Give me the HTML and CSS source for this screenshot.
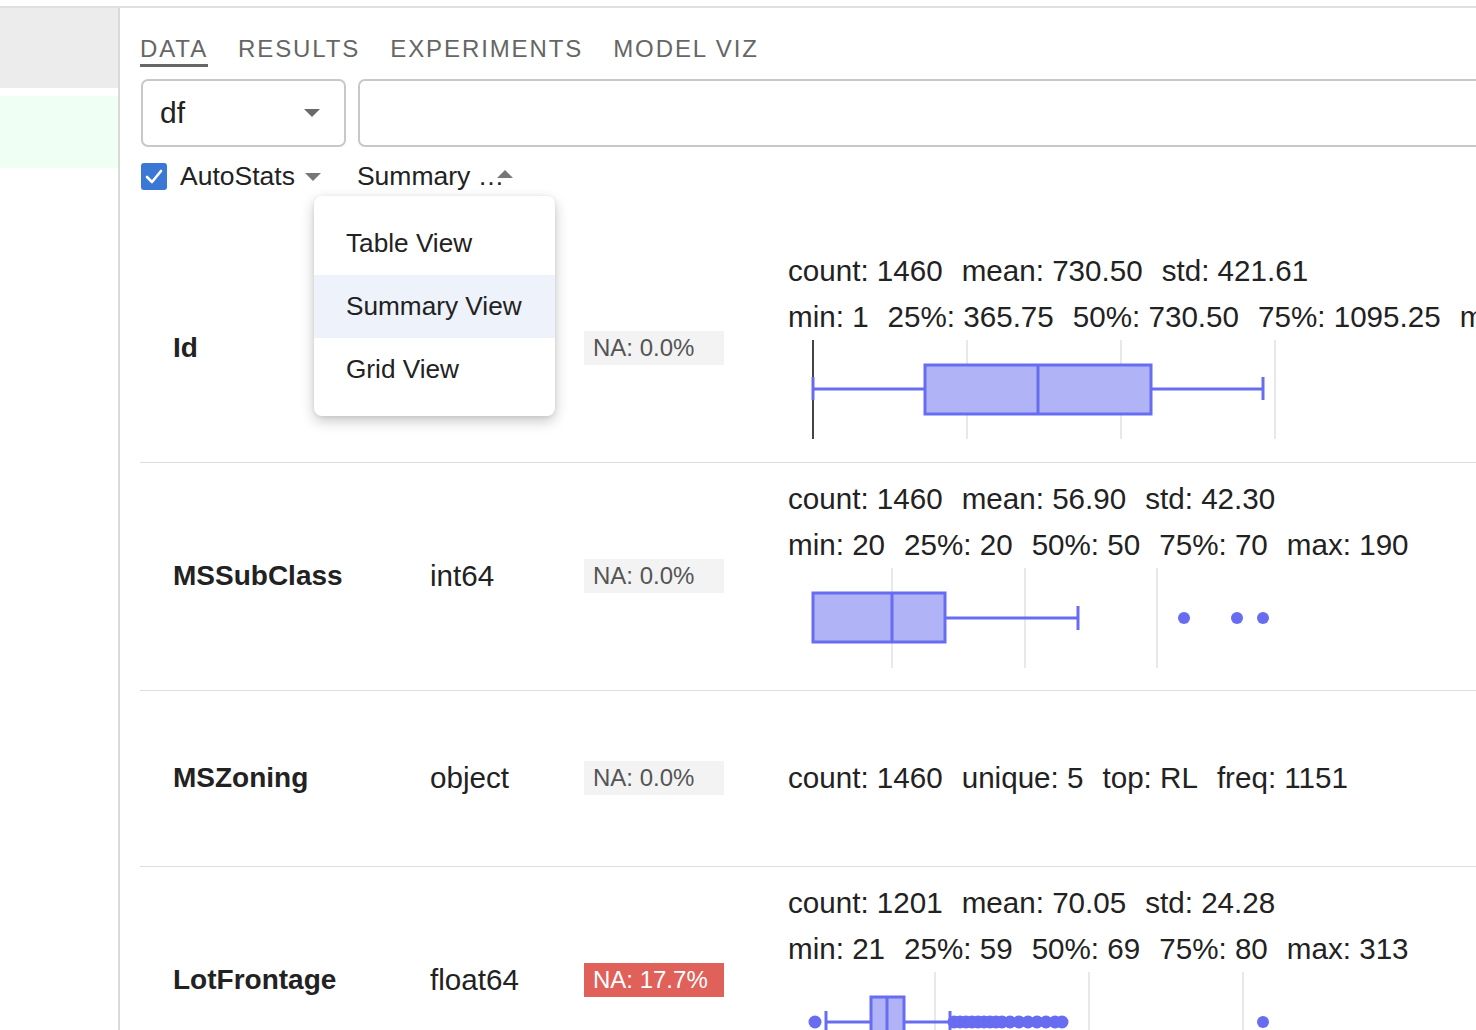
FILE: index.html
```html
<!DOCTYPE html>
<html>
<head>
<meta charset="utf-8">
<link rel="stylesheet" href="styles.css">
</head>
<body>
<div class="topline"></div>
<div class="app">
  <aside class="sidebar">
    <div class="side-gray"></div>
    <div class="side-green"></div>
  </aside>
  <main class="main">
    <nav class="tabs">
      <div class="tab active">DATA</div>
      <div class="tab">RESULTS</div>
      <div class="tab">EXPERIMENTS</div>
      <div class="tab">MODEL VIZ</div>
    </nav>
    <div class="pickers">
      <div class="select"><span class="select-text">df</span><span class="tri-down big"></span></div>
      <div class="textbox"></div>
    </div>
    <div class="options">
      <span class="checkbox"><svg width="26" height="27" viewBox="0 0 26 27"><polyline points="6,14 11,19 20,8" fill="none" stroke="#fff" stroke-width="2.6" stroke-linecap="round" stroke-linejoin="round"/></svg></span>
      <span class="opt-label">AutoStats</span><span class="tri-down small"></span>
      <span class="opt-label summary">Summary …</span><span class="tri-up"></span>
    </div>

    <div class="rows">
      <div class="row">
        <div class="col-name">Id</div>
        <div class="col-type"></div>
        <div class="col-na"><span class="na">NA: 0.0%</span></div>
        <div class="col-stats">
          <div class="stat-line"><span>count: 1460</span><span>mean: 730.50</span><span>std: 421.61</span></div>
          <div class="stat-line"><span>min: 1</span><span>25%: 365.75</span><span>50%: 730.50</span><span>75%: 1095.25</span><span>max: 1460</span></div>
          <svg class="plot" width="690" height="108" viewBox="0 0 690 108">
            <g stroke="#e8e8e8" stroke-width="2">
              <line x1="179" y1="0" x2="179" y2="99"/>
              <line x1="333" y1="0" x2="333" y2="99"/>
              <line x1="487" y1="0" x2="487" y2="99"/>
            </g>
            <line x1="25" y1="0" x2="25" y2="99" stroke="#444" stroke-width="2"/>
            <g stroke="#676cf0" stroke-width="3">
              <line x1="25" y1="49" x2="137" y2="49"/>
              <line x1="25" y1="37" x2="25" y2="60"/>
              <rect x="137" y="25" width="226" height="49" fill="#b0b3f6"/>
              <line x1="250" y1="25" x2="250" y2="74"/>
              <line x1="363" y1="49" x2="475" y2="49"/>
              <line x1="475" y1="37" x2="475" y2="60"/>
            </g>
          </svg>
        </div>
      </div>

      <div class="row">
        <div class="col-name">MSSubClass</div>
        <div class="col-type">int64</div>
        <div class="col-na"><span class="na">NA: 0.0%</span></div>
        <div class="col-stats">
          <div class="stat-line"><span>count: 1460</span><span>mean: 56.90</span><span>std: 42.30</span></div>
          <div class="stat-line"><span>min: 20</span><span>25%: 20</span><span>50%: 50</span><span>75%: 70</span><span>max: 190</span></div>
          <svg class="plot" width="690" height="108" viewBox="0 0 690 108">
            <g stroke="#e8e8e8" stroke-width="2">
              <line x1="104" y1="0" x2="104" y2="100"/>
              <line x1="237" y1="0" x2="237" y2="100"/>
              <line x1="369" y1="0" x2="369" y2="100"/>
            </g>
            <g stroke="#676cf0" stroke-width="3">
              <rect x="25" y="25" width="132" height="49" fill="#b0b3f6"/>
              <line x1="104" y1="25" x2="104" y2="74"/>
              <line x1="157" y1="50" x2="290" y2="50"/>
              <line x1="290" y1="38" x2="290" y2="62"/>
            </g>
            <g fill="#676cf0">
              <circle cx="396" cy="50" r="6"/>
              <circle cx="449" cy="50" r="6"/>
              <circle cx="475" cy="50" r="6"/>
            </g>
          </svg>
        </div>
      </div>

      <div class="row">
        <div class="col-name">MSZoning</div>
        <div class="col-type">object</div>
        <div class="col-na"><span class="na">NA: 0.0%</span></div>
        <div class="col-stats">
          <div class="stat-line"><span>count: 1460</span><span>unique: 5</span><span>top: RL</span><span>freq: 1151</span></div>
        </div>
      </div>

      <div class="row">
        <div class="col-name">LotFrontage</div>
        <div class="col-type">float64</div>
        <div class="col-na"><span class="na bad">NA: 17.7%</span></div>
        <div class="col-stats">
          <div class="stat-line"><span>count: 1201</span><span>mean: 70.05</span><span>std: 24.28</span></div>
          <div class="stat-line"><span>min: 21</span><span>25%: 59</span><span>50%: 69</span><span>75%: 80</span><span>max: 313</span></div>
          <svg class="plot" width="690" height="108" viewBox="0 0 690 108">
            <g stroke="#e8e8e8" stroke-width="2">
              <line x1="147" y1="0" x2="147" y2="100"/>
              <line x1="301" y1="0" x2="301" y2="100"/>
              <line x1="455" y1="0" x2="455" y2="100"/>
            </g>
            <g stroke="#676cf0" stroke-width="3">
              <line x1="38" y1="50" x2="83" y2="50"/>
              <line x1="38" y1="39" x2="38" y2="62"/>
              <rect x="83" y="25" width="33" height="49" fill="#b0b3f6"/>
              <line x1="99" y1="25" x2="99" y2="74"/>
              <line x1="116" y1="50" x2="162" y2="50"/>
              <line x1="162" y1="39" x2="162" y2="62"/>
            </g>
            <g fill="#676cf0">
              <circle cx="27" cy="50" r="6.5"/>
              <circle cx="166" cy="50" r="6.5"/>
              <circle cx="172" cy="50" r="6.5"/>
              <circle cx="178" cy="50" r="6.5"/>
              <circle cx="184" cy="50" r="6.5"/>
              <circle cx="190" cy="50" r="6.5"/>
              <circle cx="196" cy="50" r="6.5"/>
              <circle cx="202" cy="50" r="6.5"/>
              <circle cx="208" cy="50" r="6.5"/>
              <circle cx="214" cy="50" r="6.5"/>
              <circle cx="222" cy="50" r="6.5"/>
              <circle cx="231" cy="50" r="6.5"/>
              <circle cx="240" cy="50" r="6.5"/>
              <circle cx="249" cy="50" r="6.5"/>
              <circle cx="258" cy="50" r="6.5"/>
              <circle cx="267" cy="50" r="6.5"/>
              <circle cx="274" cy="50" r="6.5"/>
              <circle cx="475" cy="50" r="6"/>
            </g>
          </svg>
        </div>
      </div>
    </div>

    <div class="menu">
      <div class="menu-item">Table View</div>
      <div class="menu-item selected">Summary View</div>
      <div class="menu-item">Grid View</div>
    </div>
  </main>
</div>
</body>
</html>
```

FILE: styles.css
```css
html, body {
  margin: 0;
  padding: 0;
  background: #fff;
}
body {
  width: 1476px;
  height: 1030px;
  overflow: hidden;
  font-family: "Liberation Sans", Arial, Helvetica, sans-serif;
  color: #222;
}
.topline {
  height: 6px;
  border-bottom: 2px solid #e0e0e0;
}
.app {
  display: flex;
  height: 1022px;
}
.sidebar {
  width: 118px;
  flex: none;
  border-right: 2px solid #d9d9d9;
}
.side-gray {
  height: 80px;
  background: #ececec;
}
.side-green {
  height: 72px;
  margin-top: 8px;
  background: #f0fff4;
}
.main {
  flex: 1;
  position: relative;
  overflow: hidden;
  padding-left: 20px;
}
.tabs {
  display: flex;
  gap: 30px;
}
.tab {
  font-size: 24px;
  line-height: 28px;
  letter-spacing: 1.9px;
  color: #666;
  padding-top: 27px;
  padding-bottom: 1px;
  border-bottom: 3px solid transparent;
}
.tab.active {
  border-bottom-color: #666;
}
.pickers {
  display: flex;
  gap: 12px;
  margin-top: 12px;
  margin-left: 1px;
}
.select {
  box-sizing: border-box;
  flex: none;
  width: 205px;
  height: 68px;
  border: 2px solid #c8c8c8;
  border-radius: 7px;
  display: flex;
  align-items: center;
  justify-content: space-between;
  padding: 0 24px 0 17px;
}
.select-text {
  font-size: 30px;
}
.textbox {
  box-sizing: border-box;
  flex: none;
  width: 1200px;
  height: 68px;
  border: 2px solid #c8c8c8;
  border-radius: 7px;
}
.tri-down {
  width: 0;
  height: 0;
  border-left: 8px solid transparent;
  border-right: 8px solid transparent;
  border-top: 8px solid #6a6a6a;
}
.tri-down.small {
  margin-left: 10px;
  border-top-color: #777;
}
.tri-up {
  width: 0;
  height: 0;
  border-left: 8px solid transparent;
  border-right: 8px solid transparent;
  border-bottom: 8px solid #777;
  margin-left: -7px;
  margin-top: -6px;
}
.options {
  display: flex;
  align-items: center;
  height: 27px;
  margin-top: 16px;
  margin-left: 1px;
}
.checkbox {
  width: 26px;
  height: 27px;
  background: #3b77d4;
  border-radius: 3px;
  display: flex;
}
.opt-label {
  font-size: 26.5px;
  margin-left: 13px;
}
.opt-label.summary {
  margin-left: 36px;
}
.rows {
  margin-top: 45px;
}
.row {
  box-sizing: border-box;
  display: flex;
  align-items: center;
  min-height: 176px;
  padding: 13px 0 14px 33px;
  border-bottom: 1px solid #dedede;
}
.col-name {
  width: 257px;
  flex: none;
  font-size: 28px;
  font-weight: bold;
}
.col-type {
  width: 154px;
  flex: none;
  font-size: 29.6px;
}
.col-na {
  width: 140px;
  flex: none;
  margin-right: 64px;
}
.na {
  display: block;
  height: 34px;
  line-height: 34px;
  padding-left: 9px;
  font-size: 24px;
  background: #f3f3f3;
  color: #555;
}
.na.bad {
  background: #e0605a;
  color: #fff;
}
.col-stats {
  flex: 1;
  min-width: 0;
  overflow: hidden;
}
.stat-line {
  font-size: 29.6px;
  line-height: 46px;
  white-space: nowrap;
}
.stat-line span {
  margin-right: 19px;
}
.plot {
  display: block;
}
.menu {
  position: absolute;
  left: 194px;
  top: 188px;
  width: 241px;
  padding: 16px 0 15px;
  background: #fff;
  border-radius: 8px;
  box-shadow: 0 5px 14px rgba(0, 0, 0, 0.22), 0 1px 4px rgba(0, 0, 0, 0.08);
}
.menu-item {
  height: 63px;
  line-height: 63px;
  padding-left: 32px;
  font-size: 26.2px;
  color: #222;
}
.menu-item.selected {
  background: #edf2fb;
}
```
